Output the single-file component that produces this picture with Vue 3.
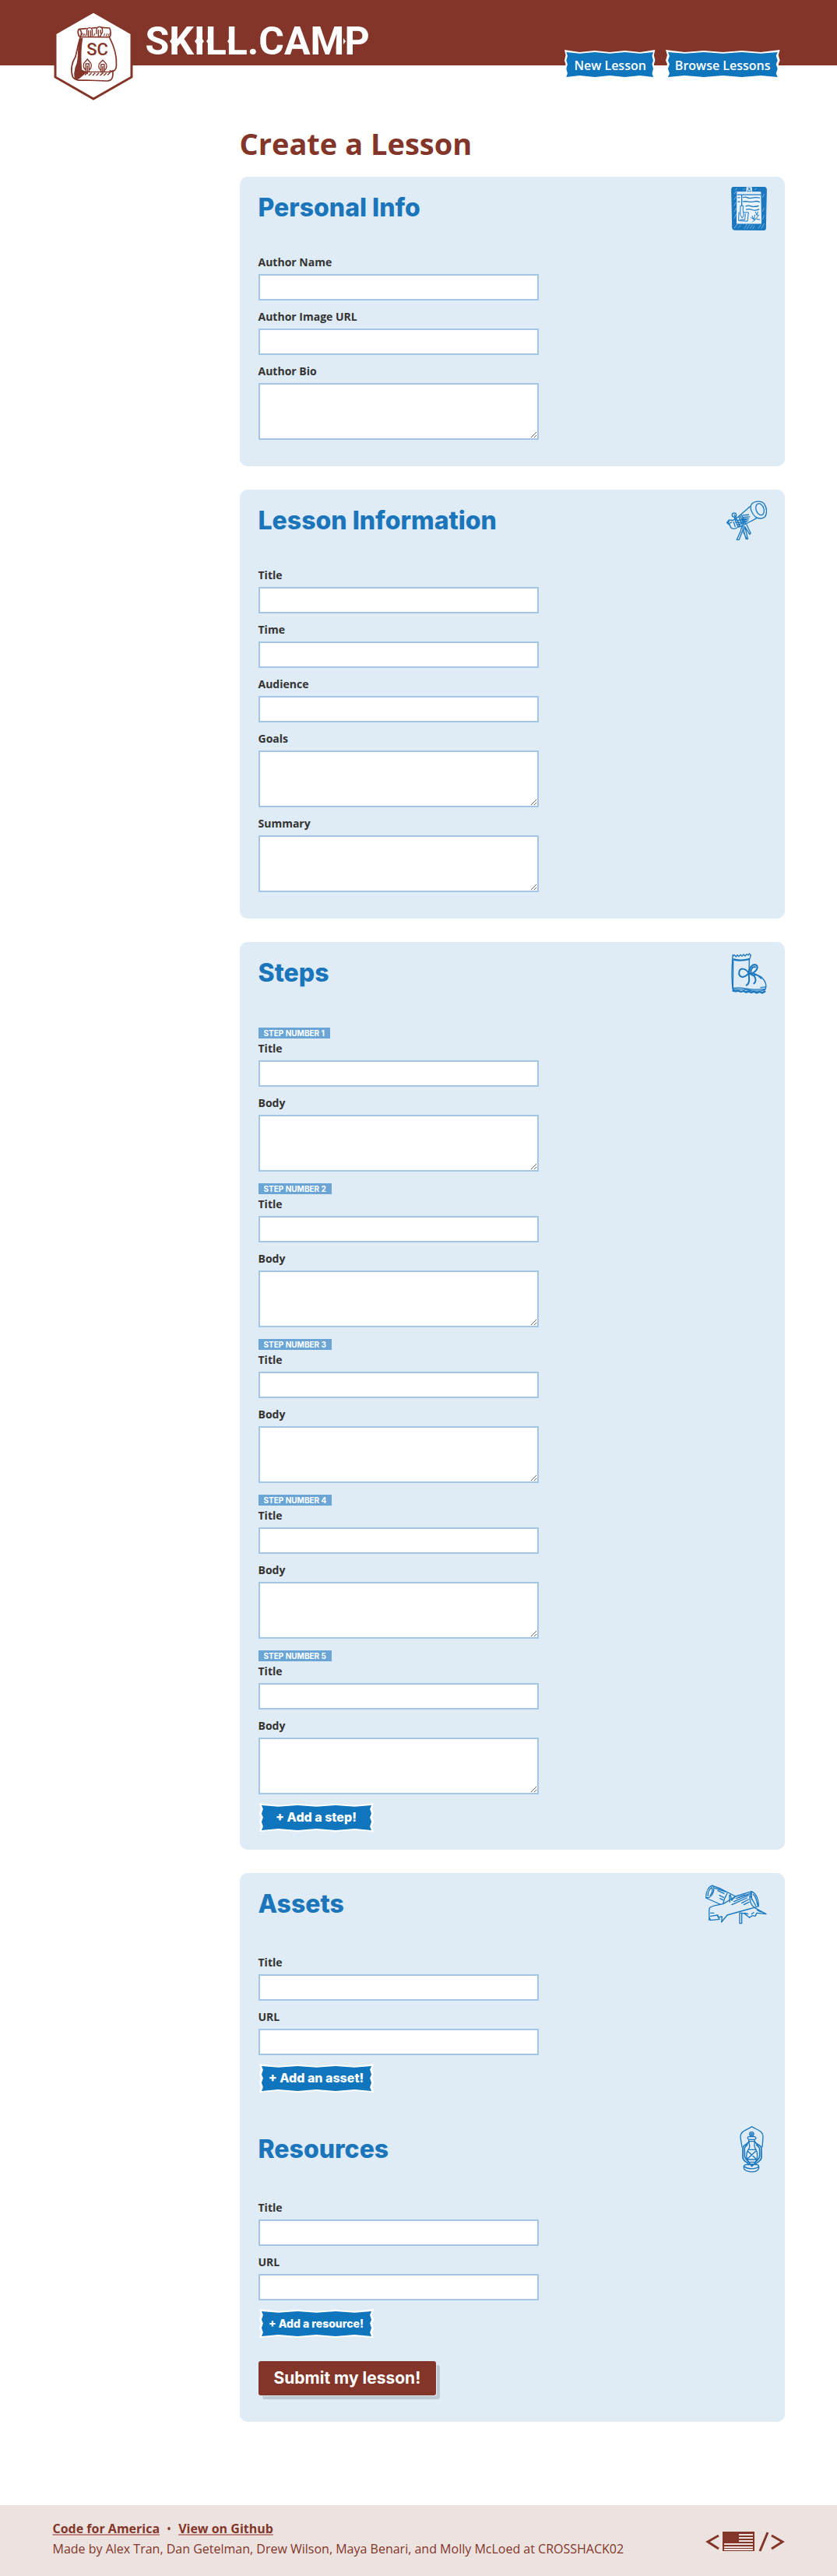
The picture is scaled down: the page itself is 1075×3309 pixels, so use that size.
<script setup>
import { ref } from 'vue'

const personalFields = [
  { id: 'author-name', label: 'Author Name' },
  { id: 'author-image', label: 'Author Image URL' },
  { id: 'author-bio', label: 'Author Bio', multiline: true },
]
const lessonFields = [
  { id: 'lesson-title', label: 'Title' },
  { id: 'lesson-time', label: 'Time' },
  { id: 'lesson-audience', label: 'Audience' },
  { id: 'lesson-goals', label: 'Goals', multiline: true },
  { id: 'lesson-summary', label: 'Summary', multiline: true },
]
const steps = ref(5)
const assets = ref(1)
const resources = ref(1)

// Torn-edge label shape shared by the nav links and the "add" buttons
const tagOuter =
  'M0 0L25 3L50 1L75 3L100 1L125 3L150 0L148 7L150 14L148 19L150 25L148 31L150 38L125 36L100 38L75 36L50 38L25 36L0 38L2 31L0 25L2 19L0 14L2 7Z'
const tagInner =
  'M3 3L25 5L50 3L75 5L100 3L125 5L147 3L145 8L147 14L145 19L147 25L145 31L147 36L125 34L100 36L75 34L50 36L25 34L3 36L5 31L3 25L5 19L3 14L5 8Z'
</script>

<template>
  <div class="page">
    <header class="site-header">
      <div class="container header-row">
        <a class="brand" href="#">
          <svg class="logo" viewBox="0 0 104 118" aria-hidden="true">
            <polygon points="52,3 101,31 101,87 52,115 3,87 3,31" fill="#fff" stroke="#833529" stroke-width="3" />
            <g transform="translate(-68 -12) scale(.3444 .3333)" fill="none" stroke="#833529" stroke-width="5" stroke-linecap="round" stroke-linejoin="round">
              <path d="M296 112C288 116 290 136 298 142L408 143C415 136 413 114 408 108L380 106M296 112L322 110M344 108L358 107M298 114C306 120 304 136 300 141" />
              <path d="M324 136V116C326 104 342 104 344 116V138M330 118V142M338 118V142M360 130V114C362 100 380 100 382 114V124L372 142M367 116V140M375 116V128" stroke-width="4" />
              <path d="M304 136L308 128M310 138L314 130M317 138V132M350 138L354 130M388 138L390 130M396 138L400 130M404 138L407 130" stroke-width="3" />
              <path d="M299 146C290 172 288 196 281 220C268 240 262 270 271 296C280 312 300 310 320 309L400 312C418 310 422 300 421 272M409 146C424 176 436 214 434 250C434 272 424 276 410 273" />
              <path d="M297 152L306 148C299 190 300 236 303 270L320 279C306 288 304 298 284 306C276 294 278 268 288 246C296 220 290 190 297 152Z" fill="#833529" />
              <path d="M304 277H416M318 288L326 280M332 290L340 282M346 290L354 282M360 290L368 282M374 290L382 282M388 290L396 282M402 288L410 280" stroke-width="4" />
              <path d="M326 228L318 238C308 246 310 262 318 268M326 228L334 238C344 246 342 262 334 268M320 246H332V276M320 246V276M326 254V284M383 232L375 240C365 248 367 264 375 270M383 232L391 240C401 248 399 264 391 270M377 248H389V278M377 248V278M383 256V284" stroke-width="4" />
            </g>
            <text x="57" y="59" text-anchor="middle" class="logo-initials">SC</text>
          </svg>
          <span class="brand-name">
            SKILL.CAMP
            <!-- small spurs on the stems of the wordmark -->
            <svg class="spurs" viewBox="0 0 286 58" aria-hidden="true">
              <path d="M34 25l-3 4 3 4zM66 25l-3 4 3 4zM72 25l3 4-3 4zM81 25l-3 4 3 4zM108 25l-3 4 3 4zM152 25l-3 4 3 4zM189 25l-5 4 3 4zM219 25l-3 4 3 4zM254 25l3 4-3 4zM262 25l-3 4 3 4z" fill="#fff" />
            </svg>
          </span>
        </a>
        <nav class="nav">
          <a v-for="item in ['New Lesson', 'Browse Lessons']" :key="item" class="tag nav-link" href="#">
            <svg class="tag-shape" viewBox="0 0 150 38" preserveAspectRatio="none" aria-hidden="true">
              <path :d="tagOuter" fill="#fff" />
              <path :d="tagInner" fill="#0f75bd" />
            </svg>
            <span class="tag-text">{{ item }}</span>
          </a>
        </nav>
      </div>
    </header>

    <main class="container">
      <form class="lesson-form" @submit.prevent>
        <h1>Create a Lesson</h1>

        <section class="panel">
          <div class="panel-head">
            <h2>Personal Info</h2>
            <svg width="46" height="59" viewBox="57 50 138 176" aria-hidden="true" fill="none" stroke="#1b78bf" stroke-linecap="round" stroke-linejoin="round">
              <path d="M64 57L188 57Q194 58 193 68L190 216Q190 222 184 222L68 221Q62 220 62 212L59 66Q58 58 64 57Z" fill="#1b78bf" stroke-width="3" />
              <path d="M81 76H170L172 196L80 196Z" fill="#eaf3fb" stroke="#eaf3fb" stroke-width="4" />
              <path d="M84 80H170M117 74V64Q118 53 127 53Q137 54 136 66V74" stroke="#dfebf5" stroke-width="4" />
              <path d="M82 86H171M98 86V128" stroke-width="4" />
              <circle cx="127" cy="64" r="6" stroke="#dfebf5" stroke-width="4" />
              <path d="M104 96Q112 93 120 97T140 98T166 98M84 97H90M84 113H90M104 112Q114 111 124 113T146 112T166 114M114 130Q124 126 134 130T162 129M116 143Q126 139 138 144T164 142" stroke-width="4" />
              <path d="M94 128H103V148L106 164L100 176L93 164ZM106 154H124L120 188L86 186L87 154M112 160L110 182H92M138 168L146 184L140 190M146 184L148 164M151 152L156 164M148 184L164 164M160 152L157 166M156 180L168 182M134 174L144 180" stroke-width="3" />
              <path d="M70 82L77 72M69 104L76 94M69 128L76 116M70 151L76 138M70 176L77 160M70 214L80 200M86 212L93 204M108 216L118 200M118 217L128 202M130 216L139 204M140 217L147 206M162 216L172 202M174 216L184 198M178 180L184 166M178 150L183 138M178 96L184 84M72 68L80 62M104 68L109 62M148 66L154 62" stroke="#a4cbe9" stroke-width="2" />
            </svg>
          </div>
          <div v-for="f in personalFields" :key="f.id" class="field">
            <label :for="f.id">{{ f.label }}</label>
            <textarea v-if="f.multiline" :id="f.id"></textarea>
            <input v-else :id="f.id" type="text" />
          </div>
        </section>

        <section class="panel">
          <div class="panel-head">
            <h2>Lesson Information</h2>
            <svg width="52" height="52" viewBox="98 67 157 157" aria-hidden="true" fill="none" stroke="#1b78bf" stroke-width="4" stroke-linecap="round" stroke-linejoin="round">
              <path d="M196 80C208 68 234 66 245 80C256 98 255 116 248 130C238 139 222 138 210 130C196 116 186 94 196 80Z" />
              <ellipse cx="228" cy="101" rx="15" ry="23" transform="rotate(-20 228 101)" />
              <path d="M190 90L144 130L122 144M214 136L176 156L146 170" />
              <path d="M122 144L108 142L100 153L112 164C114 178 132 180 142 170L150 160M108 147L104 154M112 164L108 156L118 151" />
              <circle cx="128" cy="123" r="8" /><path d="M128 122L131 126M134 130L137 144M129 132L132 142" />
              <path d="M146 130L160 160M151 126L166 158M157 124L172 156M162 124L184 122M164 132L188 130M160 138L184 138M164 146L182 145M132 144L142 166M138 140L150 164M126 150L132 168M142 144L176 140M134 152L176 150M140 160L168 154" />
              <path d="M158 165L153 186L138 219L147 219L163 178L174 216H181L170 169L188 198L192 194L176 160M162 166V178M168 166V178M164 190L176 214" />
            </svg>
          </div>
          <div v-for="f in lessonFields" :key="f.id" class="field">
            <label :for="f.id">{{ f.label }}</label>
            <textarea v-if="f.multiline" :id="f.id"></textarea>
            <input v-else :id="f.id" type="text" />
          </div>
        </section>

        <section class="panel">
          <div class="panel-head head-steps">
            <h2>Steps</h2>
            <svg width="46" height="53" viewBox="118 75 138 159" aria-hidden="true" fill="none" stroke="#1b78bf" stroke-width="4" stroke-linecap="round" stroke-linejoin="round">
              <path d="M125 82L123 96L121 150C121 180 122 204 126 222M124 98Q156 107 190 97L194 84L188 78L184 84L178 80L172 87L166 81L160 88L154 82L148 89L142 83L137 90L131 83L125 88M128 102Q150 109 189 101" />
              <path d="M188 101L187 152M126 104L125 212M124 211Q150 207 174 213T250 214C256 202 250 184 240 174C232 162 218 160 206 160M126 216Q160 214 190 220T248 218L252 208M232 209L252 206" />
              <path d="M126 221L136 223L146 221L156 225L166 222L176 227L186 223L196 228L206 224L216 229L228 225L238 229L248 224" stroke-width="7" />
              <path d="M186 154C174 132 152 132 149 149C146 166 160 172 174 164L186 154C186 128 206 114 217 124C224 136 212 148 198 154L186 157C188 176 190 194 177 200M188 155L207 164C215 176 214 188 206 193M188 155L204 154C216 158 224 162 234 173M194 150C192 136 204 126 211 130" stroke-width="6" />
            </svg>
          </div>
          <fieldset v-for="n in steps" :key="n" class="step">
            <legend class="step-badge">STEP NUMBER {{ n }}</legend>
            <div class="field">
              <label :for="`step-title-${n}`">Title</label>
              <input :id="`step-title-${n}`" type="text" />
            </div>
            <div class="field">
              <label :for="`step-body-${n}`">Body</label>
              <textarea :id="`step-body-${n}`"></textarea>
            </div>
          </fieldset>
          <button type="button" class="tag add-button" @click="steps++">
            <svg class="tag-shape" viewBox="0 0 150 38" preserveAspectRatio="none" aria-hidden="true">
              <path :d="tagOuter" fill="#fff" />
              <path :d="tagInner" fill="#0f75bd" />
            </svg>
            <span class="tag-text">+ Add a step!</span>
          </button>
        </section>

        <section class="panel">
          <div class="panel-head head-links">
            <h2>Assets</h2>
            <svg width="80" height="51" viewBox="69 71 240 153" aria-hidden="true" fill="none" stroke="#1b78bf" stroke-width="4" stroke-linecap="round" stroke-linejoin="round">
              <path d="M74 121C74 96 84 78 100 74C110 86 102 112 86 120L74 122L128 146M82 114C80 100 88 86 97 82M90 112C98 104 100 94 98 86M100 75L130 86L188 116L176 128M108 84L150 98M120 94L144 105M126 112L142 120M128 124L140 130M156 104L146 124L140 144M164 112L166 138M168 110L174 132" />
              <path d="M86 208C88 196 84 172 88 160C102 148 124 150 142 144L188 116L250 97C266 104 276 126 277 154C268 158 254 160 242 164L156 188L134 215L136 194L124 196L118 190L126 204L92 208L86 196M92 180H104M92 192L120 188M250 97C238 116 242 146 260 158M256 108C270 120 268 140 274 150M250 104V128M246 116L266 152M190 124L242 106M182 136L238 112M174 148L232 122M212 142L238 128M220 148L240 138M198 120L224 110" />
              <path d="M204 180H212V220H204ZM212 180L222 182L242 198L252 190L264 192L270 180L306 184L282 171L262 160M224 180L236 184M250 184L258 178M272 170L286 176" />
            </svg>
          </div>
          <template v-for="n in assets" :key="n">
            <div class="field">
              <label :for="`asset-title-${n}`">Title</label>
              <input :id="`asset-title-${n}`" type="text" />
            </div>
            <div class="field">
              <label :for="`asset-url-${n}`">URL</label>
              <input :id="`asset-url-${n}`" type="text" />
            </div>
          </template>
          <button type="button" class="tag add-button" @click="assets++">
            <svg class="tag-shape" viewBox="0 0 150 38" preserveAspectRatio="none" aria-hidden="true">
              <path :d="tagOuter" fill="#fff" />
              <path :d="tagInner" fill="#0f75bd" />
            </svg>
            <span class="tag-text">+ Add an asset!</span>
          </button>

          <div class="panel-head head-links head-inner">
            <h2>Resources</h2>
            <svg class="lantern" width="31" height="60" viewBox="151 69 93 180" aria-hidden="true" fill="none" stroke="#1b78bf" stroke-width="4" stroke-linecap="round" stroke-linejoin="round">
              <path d="M160 150L154 112C154 86 180 84 198 71C216 84 242 86 241 112L238 150" />
              <circle cx="197" cy="100" r="8" /><circle cx="197" cy="100" r="3" />
              <path d="M185 110H210C217 116 214 120 208 121H188C180 119 180 113 185 110ZM187 128H209M186 121V132C190 144 192 150 184 160C174 174 176 196 184 208H212C220 196 222 174 214 160C206 150 206 144 209 132V121M184 160H213M182 166L213 194M213 166L182 194M182 198H215" />
              <path d="M187 130C172 146 162 142 163 160V190C164 204 178 206 184 216H212C220 206 234 204 235 190V160C236 142 224 146 209 130M180 142C166 154 170 154 170 170V186C172 198 186 204 190 214M216 142C230 154 228 154 228 170V186C226 198 212 204 208 214M194 218L198 224L203 218" stroke-width="5" />
              <path d="M174 218C164 222 164 234 174 240C190 248 210 247 220 239C228 232 226 222 220 218M170 226C184 236 212 236 224 226M176 218H218" />
            </svg>
          </div>
          <template v-for="n in resources" :key="n">
            <div class="field">
              <label :for="`resource-title-${n}`">Title</label>
              <input :id="`resource-title-${n}`" type="text" />
            </div>
            <div class="field">
              <label :for="`resource-url-${n}`">URL</label>
              <input :id="`resource-url-${n}`" type="text" />
            </div>
          </template>
          <button type="button" class="tag add-button add-small" @click="resources++">
            <svg class="tag-shape" viewBox="0 0 150 38" preserveAspectRatio="none" aria-hidden="true">
              <path :d="tagOuter" fill="#fff" />
              <path :d="tagInner" fill="#0f75bd" />
            </svg>
            <span class="tag-text">+ Add a resource!</span>
          </button>

          <button type="submit" class="submit">Submit my lesson!</button>
        </section>
      </form>
    </main>

    <footer class="site-footer">
      <div class="container footer-row">
        <div class="credits">
          <p class="links">
            <a href="#">Code for America</a><span class="dot">•</span><a href="#">View on Github</a>
          </p>
          <p>Made by Alex Tran, Dan Getelman, Drew Wilson, Maya Benari, and Molly McLoed at CROSSHACK02</p>
        </div>
        <svg class="code-flag" width="102" height="28" viewBox="0 0 102 28" aria-hidden="true">
          <path d="M17 6L3 14L17 23M85 6L99 14L85 23M80 2L70 26" fill="none" stroke="#833529" stroke-width="3" />
          <rect x="22" y="1" width="41" height="25" fill="#833529" />
          <path d="M43 5H61M43 9H61M43 13H61M24 17H61M24 21H61M24 24H61" stroke="#ece3e1" stroke-width="2" />
        </svg>
      </div>
    </footer>
  </div>
</template>

<style>
body {
  margin: 0;
  background: #fff;
}
</style>

<style scoped>
.page {
  font-family: "Open Sans", sans-serif;
  font-size: 14px;
  color: #333;
}
.container {
  max-width: 940px;
  margin: 0 auto;
}
.site-header {
  height: 84px;
  background: #833529;
}
.header-row,
.brand,
.nav {
  display: flex;
  align-items: flex-start;
}
.header-row {
  justify-content: space-between;
}
.brand {
  padding-top: 12px;
  gap: 15px;
  color: #fff;
  text-decoration: none;
}
.logo {
  width: 104px;
  height: 118px;
  flex: none;
}
.logo-initials {
  font: 500 22px Roboto, sans-serif;
  fill: #833529;
}
.brand-name {
  position: relative;
  margin-top: 12px;
  font: 700 50px/58px Roboto, sans-serif;
}
.spurs {
  position: absolute;
  top: 0;
  left: 0;
  width: 286px;
  height: 58px;
}
.nav {
  gap: 13px;
  padding: 64px 6px 0 0;
}
.tag {
  position: relative;
  display: block;
  height: 37px;
  padding: 0;
  border: 0;
  background: none;
  color: #fff;
  text-align: center;
  cursor: pointer;
}
.tag-shape {
  position: absolute;
  inset: 0;
  width: 100%;
  height: 100%;
}
.tag-text {
  position: relative;
}
.nav-link {
  padding: 0 12px;
  font-size: 16px;
  font-weight: 600;
  line-height: 40px;
  text-decoration: none;
}
.lesson-form {
  margin-left: 240px;
  padding-bottom: 107px;
}
h1 {
  margin: 0 0 19px;
  padding-top: 76px;
  font-size: 38px;
  line-height: 48px;
  font-weight: 700;
  color: #833529;
}
.panel {
  padding: 8px 23px 23px 24px;
  border-radius: 10px;
  background: #dfebf5;
}
.panel + .panel {
  margin-top: 30px;
}
.panel-head {
  display: flex;
  align-items: center;
  justify-content: space-between;
  height: 64px;
  margin-bottom: 28px;
}
.head-steps {
  margin-bottom: 38px;
}
.head-links {
  margin-bottom: 33px;
}
.head-inner {
  margin-top: 41px;
}
.lantern {
  margin-right: 4px;
}
h2 {
  margin: 0;
  font: 800 32px/40px Inter, sans-serif;
  color: #1b75bb;
}
.field {
  display: flex;
  flex-direction: column;
  gap: 5px;
  margin-bottom: 11px;
}
label {
  font-weight: 700;
  line-height: 20px;
}
input,
textarea {
  box-sizing: border-box;
  width: 100%;
  max-width: 360px;
  margin: 0;
  padding: 4px 8px;
  border: 2px solid #a4c6e4;
  border-radius: 0;
  background: #fff;
  font: inherit;
}
input {
  height: 34px;
}
textarea {
  height: 73px;
  resize: both;
}
.step {
  min-width: 0;
  margin: 0;
  padding: 0;
  border: 0;
}
.step + .step {
  margin-top: 4px;
}
.step-badge {
  margin-bottom: 3px;
  padding: 0 7px;
  background: #6aa5d5;
  color: #fff;
  font: 700 10px/14px Inter, sans-serif;
}
.add-button {
  width: 147px;
  margin-left: 1px;
  font: 800 16px/37px Inter, sans-serif;
}
.add-small {
  font-size: 14px;
}
.submit {
  display: block;
  height: 44px;
  margin: 30px 0 11px;
  padding: 0 20px;
  border: 0;
  border-radius: 3px;
  background: #833529;
  box-shadow: 1px 1px 0 #dfebf5, 5px 5px 0 #bfc9d1;
  color: #fff;
  font: 700 21px/44px Inter, sans-serif;
  cursor: pointer;
}
.site-footer {
  padding: 17px 0 22px;
  background: #ece3e1;
  color: #833529;
}
.footer-row {
  display: flex;
  align-items: center;
  justify-content: space-between;
}
.credits p {
  margin: 0;
  font-size: 16px;
  line-height: 26px;
}
.links a {
  color: #833529;
  font-weight: 700;
  text-decoration: underline;
  text-decoration-color: #c08a84;
  text-decoration-thickness: 2px;
}
.dot {
  margin: 0 9px;
}
.code-flag {
  flex: none;
  margin-top: 8px;
}
</style>
